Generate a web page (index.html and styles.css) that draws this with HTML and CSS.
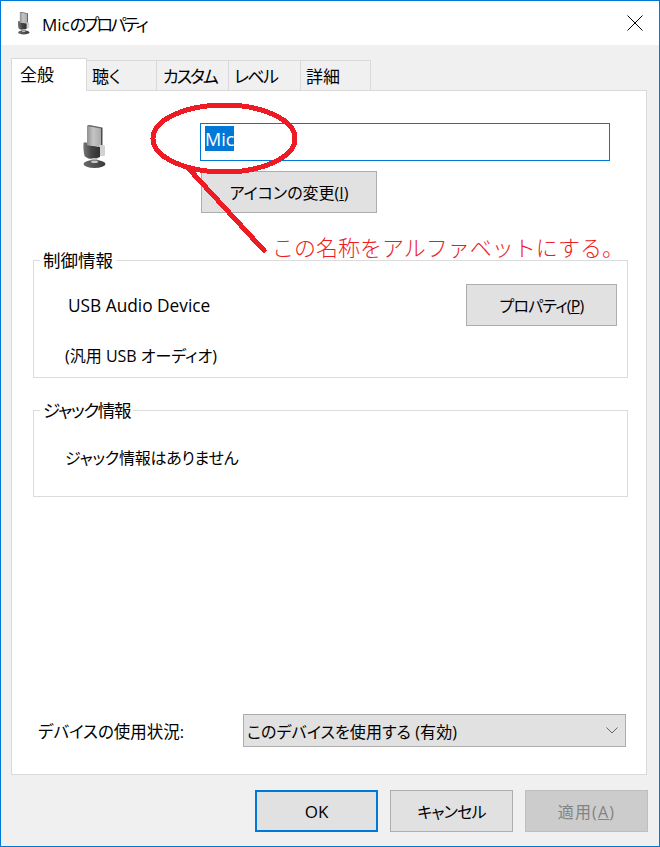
FILE: index.html
```html
<!DOCTYPE html>
<html lang="ja">
<head>
<meta charset="utf-8">
<title>Micのプロパティ</title>
<link rel="stylesheet" href="styles.css">
</head>
<body>
<svg class="defs" width="0" height="0" aria-hidden="true">
  <defs>
    <linearGradient id="mesh" x1="0" y1="0" x2="1" y2="0">
      <stop offset="0" stop-color="#8f8f8f"/>
      <stop offset=".4" stop-color="#c4c4c4"/>
      <stop offset="1" stop-color="#a8a8a8"/>
    </linearGradient>
    <linearGradient id="band" x1="0" y1="0" x2="1" y2="0">
      <stop offset="0" stop-color="#777"/>
      <stop offset=".5" stop-color="#444"/>
      <stop offset="1" stop-color="#303030"/>
    </linearGradient>
    <linearGradient id="foot" x1="0" y1="0" x2="1" y2="0">
      <stop offset="0" stop-color="#6a6a6a"/>
      <stop offset="1" stop-color="#3a3a3a"/>
    </linearGradient>
    <symbol id="mic" viewBox="0 0 24 44">
      <path d="M5 1 L7 0 L20 2.500 L20 22 L5 20 Z" fill="url(#mesh)"/>
      <path d="M5 1 L7 0 L20 2.500 L19 3.500 Z" fill="#666"/>
      <path d="M19 3 L20.500 2.500 L20.500 23 L19 23 Z" fill="#4a4a4a"/>
      <rect x="17" y="20" width="6" height="11" rx="1.500" fill="#d2d2d2"/>
      <path d="M1.500 18 C2.500 17 4 17 5 18 L5 20 L18 22 L18 32 C12 35 6 34.500 2.500 31 C1.500 27 1.200 22 1.500 18 Z" fill="url(#band)"/>
      <rect x="9.500" y="33" width="6" height="4" fill="#b9b9b9"/>
      <ellipse cx="12.500" cy="39" rx="11" ry="4" fill="url(#foot)"/>
      <ellipse cx="12.500" cy="36.800" rx="3.500" ry="1.300" fill="#c8c8c8"/>
    </symbol>
  </defs>
</svg>
<div class="window">
  <header class="titlebar">
    <svg class="title-icon" aria-hidden="true"><use href="#mic"/></svg>
    <span class="title-text">Mic<span class="title-kana">のプロパティ</span></span>
    <svg class="close" viewBox="0 0 16 16" aria-hidden="true"><path d="M.5 .5 L15.500 15.500 M15.500 .5 L.5 15.500"/></svg>
  </header>
  <main class="client">
    <nav class="tabs">
      <div class="tab active">全般</div>
      <div class="tab">聴く</div>
      <div class="tab tab-custom">カスタム</div>
      <div class="tab tab-level">レベル</div>
      <div class="tab">詳細</div>
    </nav>
    <section class="panel">
      <div class="head">
        <svg class="device-icon" aria-hidden="true"><use href="#mic"/></svg>
        <div class="name-col">
          <div class="name-input"><span class="selected">Mic</span></div>
          <button class="btn change-btn">アイコンの変更(<u>I</u>)</button>
        </div>
      </div>
      <fieldset class="group controller">
        <legend><span class="legend-text">制御情報</span></legend>
        <div class="controller-body">
          <div class="controller-top">
            <span class="device-name">USB Audio Device</span>
            <button class="btn props-btn">プロパティ(<u>P</u>)</button>
          </div>
          <div class="device-desc">(汎用 USB オーディオ)</div>
        </div>
      </fieldset>
      <fieldset class="group jack">
        <legend><span class="legend-text legend-jack">ジャック情報</span></legend>
        <div class="jack-text">ジャック情報はありません</div>
      </fieldset>
      <div class="usage">
        <span class="usage-label">デバイスの使用状況:</span>
        <div class="dropdown">
          <span class="dropdown-text">このデバイスを使用する (有効)</span>
          <svg class="chevron" viewBox="0 0 12 7" aria-hidden="true"><path d="M.5 .5 L6 6 L11.500 .5"/></svg>
        </div>
      </div>
    </section>
    <footer class="actions">
      <button class="btn action default">OK</button>
      <button class="btn action cancel">キャンセル</button>
      <button class="btn action disabled">適用(<u>A</u>)</button>
    </footer>
  </main>
  <svg class="markup" viewBox="0 0 660 847" aria-hidden="true">
    <ellipse cx="224" cy="138.500" rx="71" ry="33.500"/>
    <path d="M189 169 L264 250.500"/>
  </svg>
  <div class="note">この名称をアルファベットにする。</div>
</div>
</body>
</html>
```
FILE: styles.css
```css
* { box-sizing: border-box; }

html, body {
  margin: 0;
  padding: 0;
  background: #fff;
}

body {
  font-family: "Open Sans", "Noto Sans CJK JP", sans-serif;
  font-size: 16px;
  font-feature-settings: "palt";
  color: #000;
}

.defs { position: absolute; }

.window {
  position: relative;
  width: 660px;
  height: 847px;
  border: 1px solid #0078d7;
  display: flex;
  flex-direction: column;
  overflow: hidden;
}

.titlebar {
  height: 44px;
  flex: none;
  background: #fff;
  display: flex;
  align-items: center;
  padding: 0 16px 0 16px;
}

.title-icon { width: 13px; height: 23px; flex: none; }

.title-text {
  margin-left: 12px;
  flex: 1;
  font-size: 17px;
}

.title-kana { letter-spacing: -2.600px; }

.close { width: 16px; height: 16px; flex: none; }
.close path { stroke: #000; stroke-width: 1; fill: none; }

.client {
  flex: 1;
  min-height: 0;
  background: #f0f0f0;
  padding: 13px 12px 0 10px;
  display: flex;
  flex-direction: column;
}

.tabs {
  display: grid;
  grid-template-columns: 76px 70px 72px 72px 70px;
  align-items: end;
  height: 32px;
  position: relative;
  z-index: 1;
}

.tab {
  height: 30px;
  padding-left: 5px;
  border: 1px solid #d9d9d9;
  border-left-width: 0;
  border-bottom-width: 0;
  background: #f0f0f0;
  line-height: 31px;
  font-size: 17px;
}

.tab.active {
  height: 33px;
  margin-bottom: -1px;
  padding-left: 8px;
  border-left-width: 1px;
  background: #fff;
  line-height: 31px;
}

.tab-custom { padding-left: 6px; letter-spacing: -2px; }
.tab-level { letter-spacing: -1.600px; }

.panel {
  height: 685px;
  flex: none;
  background: #fff;
  border: 1px solid #d9d9d9;
  display: flex;
  flex-direction: column;
  padding: 0 18px 27px 21px;
}

.head {
  display: flex;
  padding-top: 32px;
  flex: none;
}

.device-icon {
  width: 24px;
  height: 44px;
  margin: 2px 0 0 49px;
  flex: none;
}

.name-col {
  margin-left: 94px;
  flex: 1;
}

.name-input {
  height: 38px;
  border: 1px solid #0078d7;
  padding: 2px 0 0 4px;
  margin-right: 18px;
  font-size: 18px;
}

.selected {
  display: block;
  width: fit-content;
  background: #0078d7;
  color: #fff;
  height: 25px;
  line-height: 27px;
}

.btn {
  display: block;
  font: inherit;
  font-size: 16px;
  background: #e1e1e1;
  border: 1px solid #adadad;
  color: #000;
  padding: 0;
  text-align: center;
}

.change-btn {
  width: 176px;
  height: 42px;
  margin: 10px 0 0 1px;
}

.group {
  margin: 0;
  padding: 0;
  border: 1px solid #dcdcdc;
  min-width: 0;
}

.group legend {
  margin-left: 6px;
  padding: 1px 3px 0;
  font-size: 17.500px;
  line-height: 23px;
}

.legend-jack { letter-spacing: -1.300px; }

.controller { margin-top: 35px; }

.controller-body { padding: 12px 10px 9px 34px; }

.controller-top {
  display: flex;
  align-items: center;
  justify-content: space-between;
}

.device-name { font-size: 17.300px; line-height: 26px; padding-top: 1px; }

.props-btn {
  width: 151px;
  height: 42px;
  letter-spacing: -.800px;
}

.device-desc {
  margin: 18px 0 0 -3px;
  line-height: 24px;
}

.jack { margin-top: 20px; }

.jack-text {
  padding: 24px 10px 26px 31px;
  line-height: 24px;
  letter-spacing: -.250px;
}

.usage {
  margin-top: auto;
  margin-left: 5px;
  margin-right: 2px;
  display: flex;
  align-items: center;
  justify-content: space-between;
}

.usage-label { font-size: 16.500px; }

.dropdown {
  width: 383px;
  height: 33px;
  background: #e1e1e1;
  border: 1px solid #adadad;
  display: flex;
  align-items: center;
  justify-content: space-between;
  padding: 0 7px 0 3px;
}

.dropdown-text { letter-spacing: .100px; }

.chevron { width: 12px; height: 7px; }
.chevron path { fill: none; stroke: #666; stroke-width: 1; }

.actions {
  display: flex;
  justify-content: flex-end;
  gap: 12px;
  padding-top: 15px;
  margin-right: -1px;
}

.action { width: 123px; height: 42px; }
.default { border: 2px solid #0078d7; font-size: 17px; }
.cancel { letter-spacing: -.800px; }
.disabled {
  background: #ccc;
  border-color: #bfbfbf;
  color: #838383;
  letter-spacing: 1.200px;
}

.markup {
  position: absolute;
  left: -1px;
  top: -1px;
  width: 660px;
  height: 847px;
  pointer-events: none;
  shape-rendering: crispEdges;
}

.markup ellipse, .markup path {
  fill: none;
  stroke: #ed1c24;
  stroke-width: 5;
  stroke-linecap: round;
}

.note {
  position: absolute;
  left: 271px;
  top: 231px;
  font-family: "Noto Sans CJK JP", sans-serif;
  font-feature-settings: normal;
  font-weight: 300;
  font-size: 22px;
  line-height: 28px;
  color: #ed1c24;
  white-space: nowrap;
}
```
